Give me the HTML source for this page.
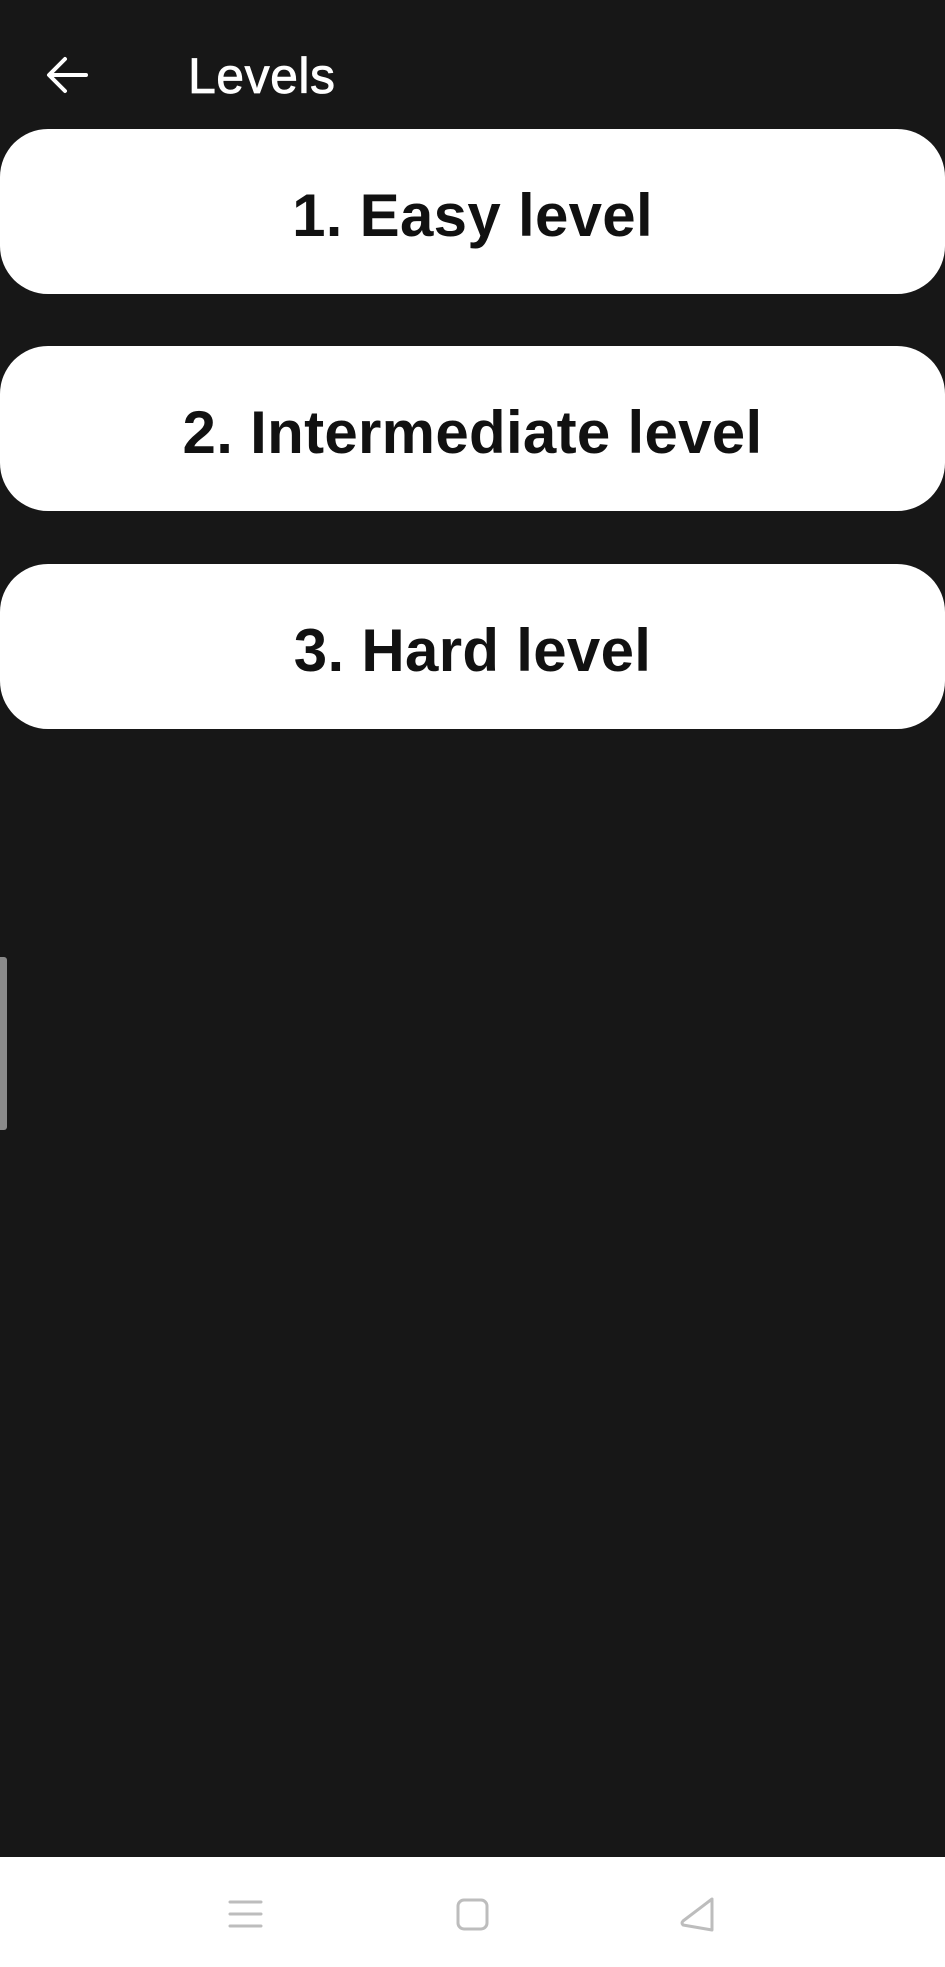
<!DOCTYPE html>
<html><head><style>
html,body{margin:0;padding:0}
body{width:945px;height:1967px;background:#171717;position:relative;overflow:hidden;font-family:"Liberation Sans",sans-serif}
.title{position:absolute;left:188px;top:46px;color:#fff;font-size:50px;line-height:60px;letter-spacing:0.5px;-webkit-text-stroke:0.8px #fff}
.btn{position:absolute;left:0;width:945px;height:165px;background:#fff;border-radius:48px;display:flex;align-items:center;justify-content:center;font-weight:bold;font-size:60px;color:#111;letter-spacing:0.3px;padding-top:8px;box-sizing:border-box}
.sb{position:absolute;left:0;top:957px;width:7px;height:173px;background:#8a8a8a;border-radius:0 3px 3px 0}
.nav{position:absolute;left:0;top:1857px;width:945px;height:110px;background:#fff}
</style></head><body>
<svg style="position:absolute;left:44px;top:52px" width="46" height="46" viewBox="0 0 46 46"><path d="M42 23H6M21 7L5 23l16 16" fill="none" stroke="#fff" stroke-width="4" stroke-linecap="round" stroke-linejoin="round"/></svg>
<div class="title">Levels</div>
<div class="btn" style="top:129px">1. Easy level</div>
<div class="btn" style="top:346px">2. Intermediate level</div>
<div class="btn" style="top:564px">3. Hard level</div>
<div class="sb"></div>
<div class="nav">
<svg style="position:absolute;left:0;top:0" width="945" height="110"><g fill="none" stroke="#bdbdbd" stroke-width="3" stroke-linecap="round">
<path d="M230 45h31M230 57h31M230 69h31"/>
<rect x="458" y="43" width="29" height="29" rx="6"/>
<path d="M712 42L683 64q-2 2 0 4L712 73Z" stroke-linejoin="round"/>
</g></svg>
</div>
</body></html>
